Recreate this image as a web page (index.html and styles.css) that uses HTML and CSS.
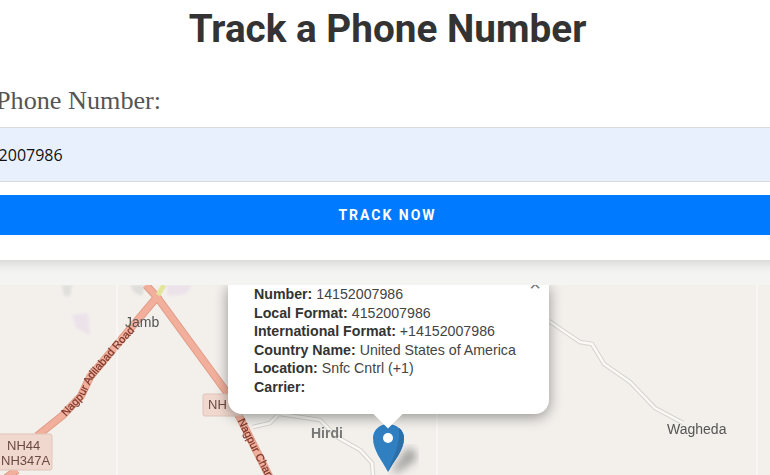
FILE: index.html
```html
<!DOCTYPE html>
<html lang="en">
<head>
<meta charset="utf-8">
<title>Track a Phone Number</title>
<link rel="stylesheet" href="styles.css">
</head>
<body>
<main class="page">
  <section class="card">
    <h1 class="title">Track a Phone Number</h1>
    <form class="form">
      <label class="label" for="phone">Phone Number:</label>
      <input class="input" id="phone" type="text" value="14152007986">
      <button class="button" type="button">TRACK NOW</button>
    </form>
  </section>
  <section class="map">
    <svg class="tiles" width="770" height="190" viewBox="0 285 770 190" aria-hidden="true">
      <defs>
        <filter id="soft"><feGaussianBlur stdDeviation="4"/></filter>
        <filter id="softer"><feGaussianBlur stdDeviation="1.5"/></filter>
        <path id="adilabad" d="M63 414 L80 396 L89 377 L118 343 L134 326"/>
        <path id="chandrapur" d="M241 419 L252 441 L272 480"/>
      </defs>
      <rect x="0" y="285" width="770" height="190" fill="#f3f0ec"/>
      <g filter="url(#softer)">
        <path d="M72 315 L88 313 L90 335 L76 328 Z" fill="#ece2ea"/>
        <path d="M62 285 L72 285 L70 296 L64 296 Z" fill="#dfdfdc"/>
        <path d="M130 285 L145 285 L142 296 L134 292 Z" fill="#dedddb"/>
        <path d="M166 285 L192 285 L186 294 L168 296 Z" fill="#ebe2ea"/>
      </g>
      <g class="lane-casing">
        <path id="lane-east" d="M549 321 L568 334 L580 342 L592 344 L604 364 L630 382 L655 408 L683 423"/>
        <path id="lane-west" d="M253 427 L270 423 L278 415 M280 414 L320 420 L337 437 L360 450 L372 463 L373 475"/>
      </g>
      <g class="lane-fill">
        <use href="#lane-east"/>
        <use href="#lane-west"/>
      </g>
      <g class="trunk-casing">
        <path id="trunk-west" d="M146 285 L157 297 L130 329 L90 377 L81 396 L63 415 L37 436 M17 470 L6 478"/>
        <path id="trunk-east" d="M157 297 L228 394 L243 424 L270 478"/>
      </g>
      <g class="trunk">
        <use href="#trunk-west"/>
        <use href="#trunk-east"/>
      </g>
      <path d="M164 285 L158 295" class="link"/>
      <line x1="117" y1="285" x2="117" y2="475" class="seam"/>
      <line x1="437" y1="285" x2="437" y2="475" class="seam"/>
      <line x1="757" y1="285" x2="757" y2="475" class="seam"/>
      <text class="road"><textPath href="#adilabad">Nagpur Adilabad Road</textPath></text>
      <text class="road"><textPath href="#chandrapur">Nagpur Chand</textPath></text>
      <rect x="-6" y="434" width="58" height="36" rx="2" class="shield"/>
      <rect x="203" y="394" width="40" height="22" rx="2" class="shield"/>
      <text x="7" y="450" class="shield-text">NH44</text>
      <text x="1" y="465" class="shield-text">NH347A</text>
      <text x="208" y="409" class="shield-text">NH</text>
      <text x="125" y="327" class="place">Jamb</text>
      <text x="311" y="438" class="place place-bold">Hirdi</text>
      <text x="667" y="434" class="place">Wagheda</text>
      <path d="M391 472 L408 447 Q418 450 416 460 L397 473 Z" fill="#555" opacity=".5" filter="url(#soft)"/>
      <path d="M388 472 C382 460 373 451 373 438 C373 430 380 424 388 424 C396 424 404 430 404 438 C404 451 394 460 388 472 Z" fill="#2f7fc1"/>
      <path d="M388 472 C394 460 404 451 404 438 C404 434 402 430 399 428 C401 445 392 458 388 472 Z" fill="#2a6fa8"/>
      <circle cx="388" cy="438" r="5" fill="#fff"/>
    </svg>
    <div class="popup">
      <span class="close">×</span>
      <p class="popup-text"><b class="popup-key">Number:</b> 14152007986</p>
      <p class="popup-text"><b class="popup-key">Local Format:</b> 4152007986</p>
      <p class="popup-text"><b class="popup-key">International Format:</b> +14152007986</p>
      <p class="popup-text"><b class="popup-key">Country Name:</b> United States of America</p>
      <p class="popup-text"><b class="popup-key">Location:</b> Snfc Cntrl (+1)</p>
      <p class="popup-text"><b class="popup-key">Carrier:</b></p>
      <span class="tip"></span>
    </div>
  </section>
</main>
</body>
</html>
```
FILE: styles.css
```css
html, body {
  margin: 0;
  height: 475px;
  overflow: hidden;
  background: #f4f4f3;
}
.page {
  width: 875px;
  margin-left: -50px;
}
.card {
  background: #fff;
  height: 260px;
  box-shadow: 0 2px 12px rgba(0, 0, 0, .16);
  display: flex;
  flex-direction: column;
  position: relative;
  z-index: 1;
}
.title {
  margin: 6px 0 0;
  text-align: center;
  font: 700 38.7px/46px Roboto, sans-serif;
  color: #333;
}
.form {
  display: flex;
  flex-direction: column;
  margin-top: 34px;
}
.label {
  padding-left: 46px;
  font: 400 26.2px/30px "Liberation Serif", serif;
  color: #555;
}
.input {
  margin-top: 11px;
  height: 55px;
  box-sizing: border-box;
  padding: 0 12px;
  border: 0;
  border-top: 1px solid #d9d9d9;
  border-bottom: 1px solid #d9d9d9;
  background: #e8f0fe;
  font: 400 16px "Open Sans", sans-serif;
  color: #111;
}
.button {
  margin-top: 13px;
  height: 40px;
  border: 0;
  background: #007bff;
  color: #fff;
  font: 700 14px Roboto, sans-serif;
  letter-spacing: 2px;
}
.map {
  position: relative;
  width: 770px;
  height: 190px;
  margin-top: 25px;
  margin-left: 50px;
  overflow: hidden;
}
.tiles {
  display: block;
  filter: blur(.4px);
}
.lane-casing, .lane-fill {
  fill: none;
}
.lane-casing {
  stroke: #d6d3cd;
  stroke-width: 4.5;
}
.lane-fill {
  stroke: #faf9f6;
  stroke-width: 2.5;
}
.trunk-casing, .trunk {
  fill: none;
}
.trunk-casing {
  stroke: #e09c88;
  stroke-width: 8;
}
.trunk {
  stroke: #f2b09c;
  stroke-width: 6;
}
.link {
  fill: none;
  stroke: #e3e69a;
  stroke-width: 5;
}
.seam {
  stroke: #fdfcfb;
  stroke-width: 1;
}
.road {
  font: 400 11px "Liberation Sans", sans-serif;
  fill: #7a352a;
  stroke: #7a352a;
  stroke-width: .2;
  dominant-baseline: central;
}
.shield {
  fill: #f0d8ce;
  stroke: #e0c4b9;
}
.shield-text {
  font: 400 13px "Liberation Sans", sans-serif;
  fill: #6b4a42;
}
.place {
  font: 400 14px "Liberation Sans", sans-serif;
  fill: #555;
}
.place-bold {
  font-weight: 700;
  fill: #777;
}
.popup {
  position: absolute;
  left: 228px;
  bottom: 61px;
  width: 321px;
  box-sizing: border-box;
  padding: 0 0 18px 26px;
  background: #fff;
  border-radius: 0 0 14px 14px;
  box-shadow: 0 3px 14px rgba(0, 0, 0, .4);
}
.popup-text {
  margin: 0;
  font: 400 14.2px/18.5px "Liberation Sans", sans-serif;
  color: #444;
}
.popup-key {
  color: #333;
}
.close {
  position: absolute;
  right: 8px;
  top: -11px;
  font: 400 20px/20px "Liberation Sans", sans-serif;
  color: #757575;
}
.tip {
  position: absolute;
  left: 149px;
  bottom: -10px;
  width: 22px;
  height: 22px;
  background: #fff;
  transform: rotate(45deg);
}
```
